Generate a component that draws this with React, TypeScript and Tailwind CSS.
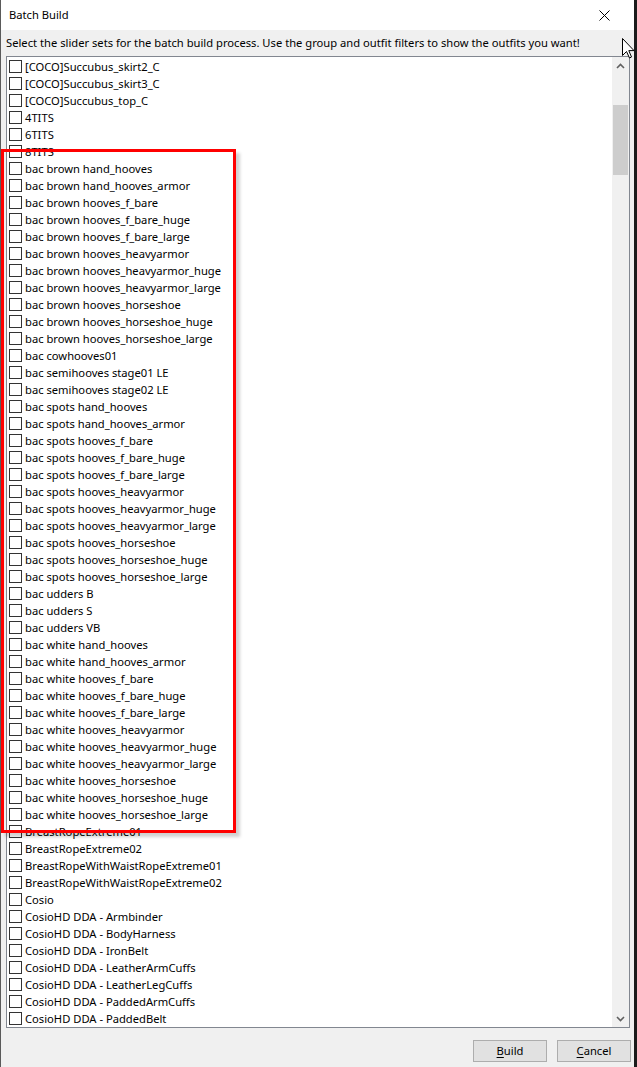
import React from "react";

const outfits: string[] = [
  "[COCO]Succubus_skirt2_C",
  "[COCO]Succubus_skirt3_C",
  "[COCO]Succubus_top_C",
  "4TITS",
  "6TITS",
  "8TITS",
  "bac brown hand_hooves",
  "bac brown hand_hooves_armor",
  "bac brown hooves_f_bare",
  "bac brown hooves_f_bare_huge",
  "bac brown hooves_f_bare_large",
  "bac brown hooves_heavyarmor",
  "bac brown hooves_heavyarmor_huge",
  "bac brown hooves_heavyarmor_large",
  "bac brown hooves_horseshoe",
  "bac brown hooves_horseshoe_huge",
  "bac brown hooves_horseshoe_large",
  "bac cowhooves01",
  "bac semihooves stage01 LE",
  "bac semihooves stage02 LE",
  "bac spots hand_hooves",
  "bac spots hand_hooves_armor",
  "bac spots hooves_f_bare",
  "bac spots hooves_f_bare_huge",
  "bac spots hooves_f_bare_large",
  "bac spots hooves_heavyarmor",
  "bac spots hooves_heavyarmor_huge",
  "bac spots hooves_heavyarmor_large",
  "bac spots hooves_horseshoe",
  "bac spots hooves_horseshoe_huge",
  "bac spots hooves_horseshoe_large",
  "bac udders B",
  "bac udders S",
  "bac udders VB",
  "bac white hand_hooves",
  "bac white hand_hooves_armor",
  "bac white hooves_f_bare",
  "bac white hooves_f_bare_huge",
  "bac white hooves_f_bare_large",
  "bac white hooves_heavyarmor",
  "bac white hooves_heavyarmor_huge",
  "bac white hooves_heavyarmor_large",
  "bac white hooves_horseshoe",
  "bac white hooves_horseshoe_huge",
  "bac white hooves_horseshoe_large",
  "BreastRopeExtreme01",
  "BreastRopeExtreme02",
  "BreastRopeWithWaistRopeExtreme01",
  "BreastRopeWithWaistRopeExtreme02",
  "Cosio",
  "CosioHD DDA - Armbinder",
  "CosioHD DDA - BodyHarness",
  "CosioHD DDA - IronBelt",
  "CosioHD DDA - LeatherArmCuffs",
  "CosioHD DDA - LeatherLegCuffs",
  "CosioHD DDA - PaddedArmCuffs",
  "CosioHD DDA - PaddedBelt",
];

function Cursor() {
  return (
    <svg width="13" height="21" viewBox="0 0 13 21" className="absolute left-[622px] top-[38px]">
      <path
        d="M0.5 0.5 L0.5 17.5 L4.5 13.5 L7.5 20 L9.5 19 L6.8 12.6 L12 12.6 Z"
        fill="#fff"
        stroke="#000"
        strokeWidth="1"
        strokeLinejoin="miter"
      />
    </svg>
  );
}

export default function App() {
  return (
    <div
      className="relative w-[637px] h-[1067px] bg-[#1b1b1b] overflow-hidden text-[11.2px] text-black"
      style={{ fontFamily: '"Noto Sans", "Open Sans", sans-serif' }}
    >
      <div className="flex flex-col w-[634px] h-full bg-[#f0f0f0] border-l border-[#5a5a5a]">
        {/* title bar */}
        <div className="flex items-center justify-between h-[30px] bg-white pl-[8px] pr-[24px]">
          <span className="leading-none">Batch Build</span>
          <svg width="11" height="11" viewBox="0 0 11 11">
            <path d="M0.5 0.5 L10.5 10.5 M10.5 0.5 L0.5 10.5" stroke="#000" strokeWidth="1" />
          </svg>
        </div>

        <div className="h-[26px] flex items-center pl-[5px] leading-none">
          Select the slider sets for the batch build process. Use the group and outfit filters to show the outfits you want!
        </div>

        {/* list box */}
        <div className="flex ml-[5px] mr-[4px] h-[972px] bg-white border border-[#828790]">
          <div className="flex-1 pt-[1px]">
            {outfits.map((name) => (
              <div key={name} className="flex items-center h-[17px] pl-[2px]">
                <span className="w-[13px] h-[13px] border border-[#333] bg-white shrink-0" />
                <span className="ml-[3px] leading-none whitespace-nowrap">{name}</span>
              </div>
            ))}
          </div>
          <div className="flex flex-col w-[17px] bg-[#f0f0f0]">
            <div className="h-[17px] flex items-center justify-center">
              <svg width="9" height="6" viewBox="0 0 9 6">
                <path d="M1 5 L4.5 1.5 L8 5" fill="none" stroke="#606060" strokeWidth="1.6" />
              </svg>
            </div>
            <div className="mt-[31px] h-[70px] mx-[1px] bg-[#cdcdcd]" />
            <div className="flex-1" />
            <div className="h-[17px] flex items-center justify-center">
              <svg width="9" height="6" viewBox="0 0 9 6">
                <path d="M1 1 L4.5 4.5 L8 1" fill="none" stroke="#606060" strokeWidth="1.6" />
              </svg>
            </div>
          </div>
        </div>

        {/* buttons */}
        <div className="flex justify-end gap-[10px] mt-[12px] pr-[3px]">
          <button className="w-[74px] h-[22px] bg-[#e1e1e1] border border-[#adadad] leading-none">
            <span className="underline underline-offset-2">B</span>uild
          </button>
          <button className="w-[74px] h-[22px] bg-[#e1e1e1] border border-[#adadad] leading-none">
            <span className="underline underline-offset-2">C</span>ancel
          </button>
        </div>
      </div>

      {/* red highlight box */}
      <div className="absolute left-[1px] top-[149px] w-[235px] h-[684px] border-[3px] border-[#ff0000] shadow-[4px_4px_3px_rgba(0,0,0,0.18)]" />

      <Cursor />
    </div>
  );
}
